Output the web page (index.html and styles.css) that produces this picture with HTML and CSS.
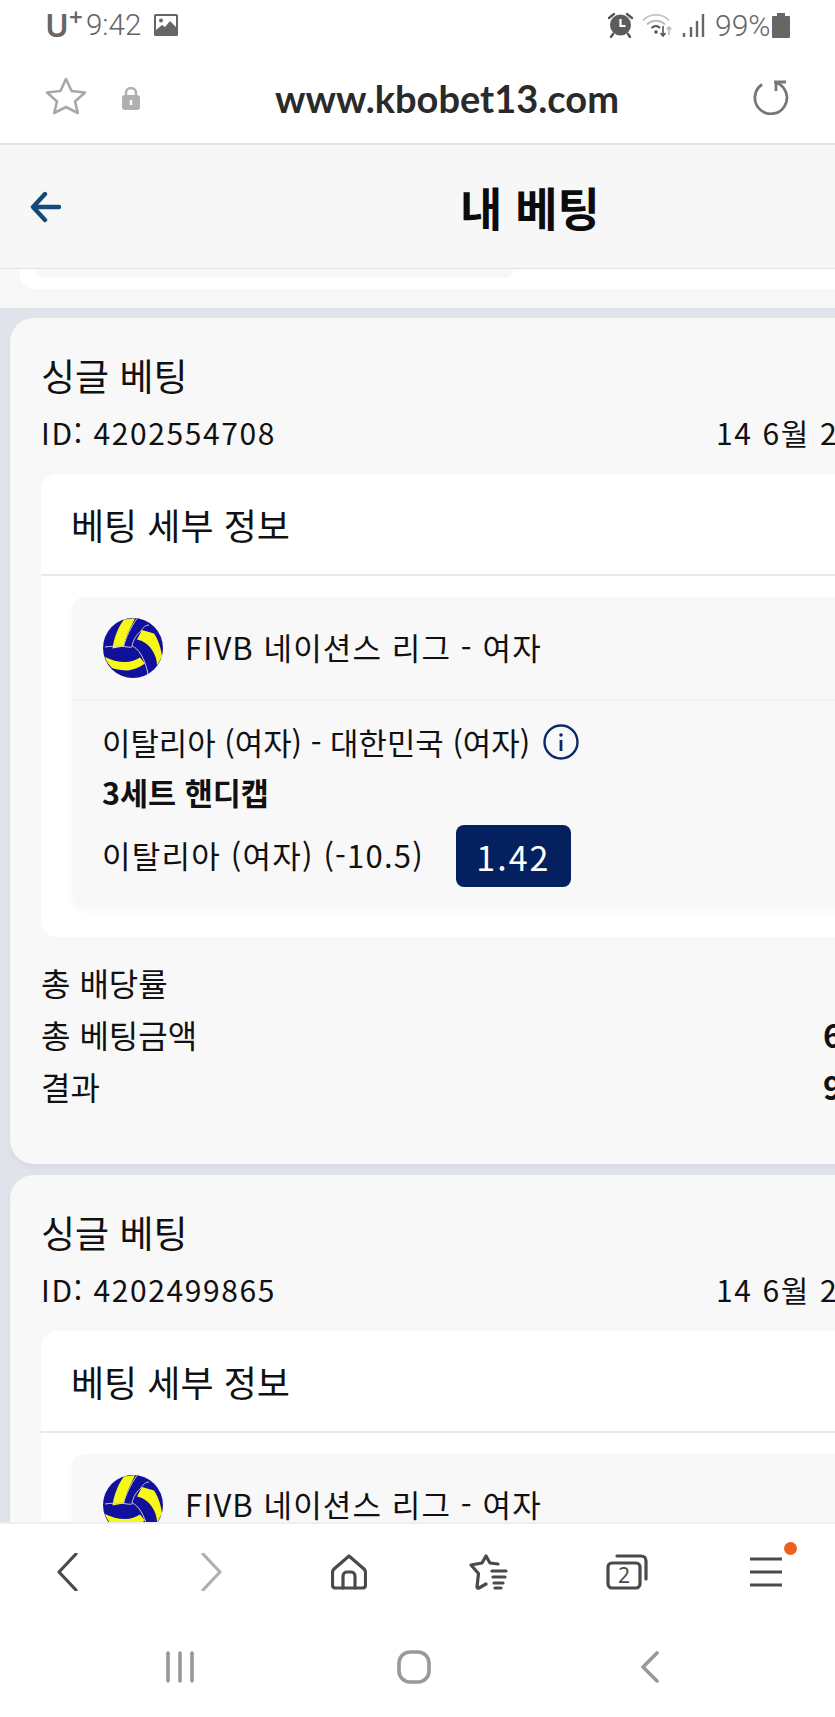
FILE: index.html
```html
<!DOCTYPE html>
<html lang="ko">
<head>
  <meta charset="UTF-8">
  <title>내 베팅</title>
  <link rel="stylesheet" href="styles.css">
</head>
<body>
  <div class="phone">
    <div class="status-bar">
      <div class="status-left">
        <span class="carrier">U<sup>+</sup></span>
        <span class="clock">9:42</span>
        <svg class="pic-icon" width="24" height="22" viewBox="0 0 24 22">
          <rect x="0" y="0" width="24" height="22" rx="1.5" fill="#666"/>
          <rect x="2" y="2" width="20" height="15" fill="#fff"/>
          <circle cx="7" cy="6.5" r="2" fill="#666"/>
          <path d="M2 16l6-5 3 2 5-6 6 6v4H2z" fill="#666"/>
        </svg>
      </div>
      <div class="status-right">
        <svg width="27" height="26" viewBox="0 0 27 26">
          <path d="M2 6l5-4M25 6l-5-4" stroke="#555" stroke-width="2.4" stroke-linecap="round"/>
          <circle cx="13.5" cy="13" r="10.5" fill="#5c5c5c"/>
          <path d="M13.5 7v7h5" stroke="#fff" stroke-width="2.2" fill="none"/>
          <path d="M6 22l-2 3M21 22l2 3" stroke="#555" stroke-width="2.4" stroke-linecap="round"/>
        </svg>
        <svg class="wifi" width="31" height="26" viewBox="0 0 31 26">
          <path d="M1 8.5C8 1 20 1 27 8.5" stroke="#c4c4c4" stroke-width="1.8" fill="none"/>
          <path d="M5 12.5c5-5 13-5 18 0" stroke="#bbb" stroke-width="1.8" fill="none"/>
          <path d="M9.5 16c3-2.5 6-2.5 8.500 0" stroke="#555" stroke-width="2" fill="none"/>
          <circle cx="14" cy="20" r="1.800" fill="#555"/>
          <path d="M21 14v10M18.500 21l2.500 3 2.500-3" stroke="#555" stroke-width="1.600" fill="none"/>
          <path d="M27 23v-8M24.800 17.500l2.200-2.500 2.200 2.500" stroke="#bbb" stroke-width="1.600" fill="none"/>
        </svg>
        <svg class="signal" width="23" height="24" viewBox="0 0 23 24">
          <path d="M2 20v4M9 14v10M15 8v16M21 1v23" stroke="#666" stroke-width="2.400"/>
        </svg>
        <span class="battery-text">99%</span>
        <svg width="18" height="25" viewBox="0 0 18 25">
          <path d="M5 0h8v3h4a1 1 0 0 1 1 1v20a1 1 0 0 1-1 1H1a1 1 0 0 1-1-1V4a1 1 0 0 1 1-1h4z" fill="#666"/>
        </svg>
      </div>
    </div>

    <div class="url-bar">
      <svg class="url-star" width="42" height="38" viewBox="0 0 42 38">
        <path d="M21 2l5.600 12 13.400 1.500-10 9 2.800 11.500L21 30l-11.800 6L12 24.500l-10-9L15.400 14z" fill="none" stroke="#a8a8a8" stroke-width="2.600" stroke-linejoin="round"/>
      </svg>
      <svg class="url-lock" width="20" height="24" viewBox="0 0 20 24">
        <path d="M5 10V7a5 5 0 0 1 10 0v3" fill="none" stroke="#b0b0b0" stroke-width="2.400"/>
        <rect x="1" y="9" width="18" height="15" rx="3" fill="#b0b0b0"/>
        <rect x="8.800" y="14" width="2.400" height="5" fill="#fff"/>
      </svg>
      <div class="url-text">www.kbobet13.com</div>
      <svg class="url-reload" width="38" height="36" viewBox="0 0 38 36">
        <path d="M11 5.500A16 16 0 1 0 26 4" fill="none" stroke="#777" stroke-width="2.800"/>
        <path d="M23 3h12M25 3v9" stroke="#777" stroke-width="2.800" fill="none"/>
      </svg>
    </div>

    <div class="page-head">
      <svg class="back-arrow" width="32" height="32" viewBox="0 0 32 32">
        <path d="M29 16H5M15 3L3 16l12 13" fill="none" stroke="#154a78" stroke-width="4.400" stroke-linecap="round" stroke-linejoin="round"/>
      </svg>
      <h1 class="page-title">내 베팅</h1>
    </div>

    <div class="content">
      <div class="prev-end">
        <div class="prev-white"><div class="prev-inner"></div></div>
      </div>

      <div class="bets">
        <div class="bet-card">
          <div class="bet-type">싱글 베팅</div>
          <div class="bet-id-row">
            <span>ID: 4202554708</span>
            <span>14 6월 2</span>
          </div>
          <div class="details">
            <div class="details-title">베팅 세부 정보</div>
            <div class="details-body">
              <div class="match">
                <div class="league">
                  <svg class="ball" width="60" height="60" viewBox="0 0 60 60">
                    <circle cx="30" cy="30" r="30" fill="#10109c"/>
                    <path d="M21 1.500L32 .2 25 15c-2 5-3.500 9-4.500 13.500L9.500 30.500C11 20 15 9 21 1.500z" fill="#f8f816"/>
                    <path d="M39 12l12 3.500c4 6 7 14 8 23l-5 9c0-6-2-11-5-15.500-3-5-8-9-15-10.500z" fill="#f8f816"/>
                    <path d="M2 39c6 3 13 5 20 5 6 0 11-2 15-4.500l5 6c-6 4-11 6-17 7-6 0-12-1-16-2.500-3-3-6-7-7-11z" fill="#f8f816"/>
                    <path d="M20.500 28.500C23 19 28 9 34 .5M38 13c-4 3-8 9-9 15M29 28c6 2 13 12 16 28M2 29c6-1 13-1 19-.500 3 .500 6 1 8 .500M46 7c-3 0-6 2-8 6" fill="none" stroke="#c9c9cf" stroke-width="1"/>
                  </svg>
                  <span class="league-name">FIVB 네이션스 리그 - 여자</span>
                </div>
                <div class="match-body">
                  <div class="teams">
                    <span>이탈리아 (여자) - 대한민국 (여자)</span>
                    <svg class="info" width="36" height="36" viewBox="0 0 36 36">
                      <circle cx="18" cy="18" r="16.500" fill="none" stroke="#0b2a6b" stroke-width="2.400"/>
                      <circle cx="18" cy="11" r="1.800" fill="#0b2a6b"/>
                      <path d="M18 16v11" stroke="#0b2a6b" stroke-width="2.800"/>
                    </svg>
                  </div>
                  <div class="market">3세트 핸디캡</div>
                  <div class="pick">
                    <span class="pick-name">이탈리아 (여자) (-10.5)</span>
                    <span class="odds">1.42</span>
                  </div>
                </div>
              </div>
            </div>
          </div>
          <div class="totals">
            <div class="total-row"><span>총 배당률</span></div>
            <div class="total-row"><span>총 베팅금액</span><b>6</b></div>
            <div class="total-row"><span>결과</span><b>9</b></div>
          </div>
        </div>

        <div class="bet-card">
          <div class="bet-type">싱글 베팅</div>
          <div class="bet-id-row">
            <span>ID: 4202499865</span>
            <span>14 6월 2</span>
          </div>
          <div class="details">
            <div class="details-title">베팅 세부 정보</div>
            <div class="details-body">
              <div class="match">
                <div class="league">
                  <svg class="ball" width="60" height="60" viewBox="0 0 60 60">
                    <circle cx="30" cy="30" r="30" fill="#10109c"/>
                    <path d="M21 1.500L32 .2 25 15c-2 5-3.500 9-4.500 13.500L9.500 30.500C11 20 15 9 21 1.500z" fill="#f8f816"/>
                    <path d="M39 12l12 3.500c4 6 7 14 8 23l-5 9c0-6-2-11-5-15.500-3-5-8-9-15-10.500z" fill="#f8f816"/>
                    <path d="M2 39c6 3 13 5 20 5 6 0 11-2 15-4.500l5 6c-6 4-11 6-17 7-6 0-12-1-16-2.500-3-3-6-7-7-11z" fill="#f8f816"/>
                    <path d="M20.500 28.500C23 19 28 9 34 .5M38 13c-4 3-8 9-9 15M29 28c6 2 13 12 16 28M2 29c6-1 13-1 19-.500 3 .500 6 1 8 .500M46 7c-3 0-6 2-8 6" fill="none" stroke="#c9c9cf" stroke-width="1"/>
                  </svg>
                  <span class="league-name">FIVB 네이션스 리그 - 여자</span>
                </div>
              </div>
            </div>
          </div>
        </div>
      </div>
    </div>

    <div class="browser-bar">
      <svg width="22" height="38" viewBox="0 0 22 38"><path d="M20 1L3 19l17 18" class="ico" stroke="#4a4a4a"/></svg>
      <svg width="22" height="38" viewBox="0 0 22 38"><path d="M2 1l17 18L2 37" class="ico" stroke="#b0b0b0"/></svg>
      <svg width="36" height="36" viewBox="0 0 36 36">
        <path d="M18 2L3 15c-1 1-1.500 2-1.500 3.500V31c0 2 1 3 3 3h27c2 0 3-1 3-3V18.500c0-1.500-.5-2.500-1.500-3.500z" class="ico" stroke="#4a4a4a"/>
        <path d="M12 34V22c0-2.500 2-4 4-4h4c2 0 4 1.500 4 4v12" class="ico" stroke="#4a4a4a"/>
      </svg>
      <svg width="40" height="36" viewBox="0 0 40 36">
        <path d="M30 10l-8-1-4-7-4 7-11 2 7.500 8.500L9 33c0 1 1 1.500 2 1l7-4" class="ico" stroke="#4a4a4a"/>
        <path d="M24 17h14M25 23h12M26 29h9M27 34h6" class="ico" stroke="#4a4a4a"/>
      </svg>
      <svg width="42" height="36" viewBox="0 0 42 36">
        <path d="M11 2h24c3 0 5 2 5 5v18" class="ico" stroke="#4a4a4a"/>
        <rect x="2" y="9" width="32" height="25" rx="4" class="ico" stroke="#4a4a4a"/>
        <text x="18" y="29" class="tab-count">2</text>
      </svg>
      <div class="menu-btn">
        <svg width="32" height="30" viewBox="0 0 32 30"><path d="M0 2h32M0 15h32M0 28h32" class="ico" stroke="#4a4a4a"/></svg>
        <span class="menu-dot"></span>
      </div>
    </div>

    <div class="nav-bar">
      <svg width="30" height="32" viewBox="0 0 30 32"><path d="M3 2v28M15 2v28M27 2v28" stroke="#999" stroke-width="3.600" stroke-linecap="round"/></svg>
      <svg width="34" height="34" viewBox="0 0 34 34"><rect x="2" y="2" width="30" height="30" rx="11" fill="none" stroke="#999" stroke-width="3.600"/></svg>
      <svg width="20" height="32" viewBox="0 0 20 32"><path d="M17 2L3 16l14 14" fill="none" stroke="#999" stroke-width="3.600" stroke-linecap="round" stroke-linejoin="round"/></svg>
    </div>
  </div>
</body>
</html>
```

FILE: styles.css
```css
* {
  box-sizing: border-box;
}

html, body {
  margin: 0;
  padding: 0;
}

body {
  width: 835px;
  height: 1717px;
  overflow: hidden;
  background: #fff;
  font-family: "Noto Sans CJK KR", "Noto Sans", sans-serif;
  color: #111;
}

svg {
  display: block;
  flex: none;
}

.phone {
  width: 835px;
  height: 1717px;
  display: flex;
  flex-direction: column;
  overflow: hidden;
}

/* status bar */
.status-bar {
  height: 50px;
  flex: none;
  display: flex;
  justify-content: space-between;
  align-items: center;
  padding: 0 45px;
  color: #666;
}

.status-left, .status-right {
  display: flex;
  align-items: center;
}

.carrier {
  font-family: "Noto Sans", sans-serif;
  font-size: 32px;
  font-weight: 600;
  line-height: 36px;
  width: 41px;
}

.carrier sup {
  font-size: 24px;
  line-height: 0;
  vertical-align: 11px;
}

.clock {
  font-family: "Roboto", sans-serif;
  font-weight: 300;
  font-size: 29.5px;
  width: 68px;
}

.wifi {
  margin-left: 8px;
}

.signal {
  margin-left: 9px;
}

.battery-text {
  font-family: "Roboto", sans-serif;
  font-weight: 300;
  font-size: 30px;
  width: 57px;
  margin-left: 10px;
}

/* url bar */
.url-bar {
  height: 95px;
  flex: none;
  display: flex;
  align-items: center;
  padding: 2px 46px 0 45px;
  border-bottom: 2px solid #e3e3e5;
}

.url-star {
  margin-bottom: 4px;
}

.url-lock {
  margin-left: 34px;
}

.url-text {
  flex: 1;
  text-align: center;
  font-family: "Lato", sans-serif;
  font-size: 38px;
  font-weight: 700;
  color: #2a2a2a;
  padding-left: 2px;
}

.url-reload {
  margin-bottom: 2px;
}

/* page header */
.page-head {
  width: 1058px;
  height: 124px;
  flex: none;
  display: grid;
  grid-template-columns: 1fr auto 1fr;
  align-items: center;
  padding: 0 28px 0 30px;
  background: #f7f7f8;
  border-bottom: 1px solid #dfe2e8;
}

.page-title {
  margin: 0 0 2px;
  font-size: 46px;
  font-weight: 700;
  line-height: 1;
  color: #0c0c0c;
}

/* scrolling part */
.content {
  flex: 1;
  min-height: 0;
  overflow: hidden;
  background: #e0e4ea;
}

.prev-end {
  height: 39px;
  background: #f8f8f9;
  padding-left: 20px;
}

.prev-white {
  height: 20px;
  background: #fff;
  border-radius: 0 0 0 14px;
  padding-left: 16px;
}

.prev-inner {
  width: 477px;
  height: 7px;
  background: #f8f8f9;
  border-radius: 0 0 12px 12px;
  box-shadow: 0 1px 2px rgba(0, 0, 0, 0.05);
}

.bets {
  width: 1048px;
  padding: 10px 0 0 10px;
  display: flex;
  flex-direction: column;
  gap: 11px;
}

.bet-card {
  flex: none;
  background: #f8f8f9;
  border-radius: 24px;
  padding: 32px 31px 0;
  height: 846px;
  box-shadow: 0 4px 6px rgba(0, 0, 0, 0.04);
}

.bet-type {
  font-size: 37px;
  line-height: 50px;
}

.bet-id-row {
  display: grid;
  grid-template-columns: 675px auto;
  font-size: 30px;
  letter-spacing: 1.6px;
  line-height: 40px;
  margin-top: 12px;
  white-space: nowrap;
}

.details {
  margin-top: 22px;
  width: 1000px;
  height: 463px;
  background: #fff;
  border-radius: 16px;
}

.details-title {
  height: 102px;
  padding: 25px 30px 0;
  font-size: 36px;
  line-height: 50px;
  border-bottom: 2px solid #e6e8ec;
}

.details-body {
  padding: 21px 31px 0;
}

.match {
  background: #f8f8f9;
  border-radius: 12px;
  height: 308px;
  box-shadow: 0 6px 8px rgba(0, 0, 0, 0.03);
}

.league {
  height: 104px;
  display: flex;
  align-items: center;
  gap: 22px;
  padding-left: 31px;
  border-bottom: 2px solid #f1f1f3;
  font-size: 31px;
  letter-spacing: 1.1px;
}

.league-name {
  margin-bottom: 3px;
}

.match-body {
  padding: 18px 30px 0;
}

.teams {
  display: flex;
  align-items: center;
  gap: 13px;
  font-size: 30.9px;
  line-height: 46px;
}

.market {
  font-size: 30.5px;
  font-weight: 700;
  line-height: 46px;
  margin-top: 4px;
}

.pick {
  display: flex;
  align-items: center;
  gap: 32px;
  font-size: 31px;
  letter-spacing: 1.2px;
  margin-top: 10px;
}

.pick-name {
  margin-bottom: 4px;
}

.odds {
  width: 115px;
  height: 62px;
  display: flex;
  align-items: center;
  justify-content: center;
  background: #04205f;
  color: #fff;
  border-radius: 8px;
  font-size: 34px;
  letter-spacing: 2px;
}

.totals {
  margin-top: 19px;
}

.total-row {
  display: grid;
  grid-template-columns: 782px auto;
  height: 52px;
  align-items: center;
  font-size: 32px;
  line-height: 52px;
}

.total-row b {
  font-weight: 700;
}

/* bottom bars */
.browser-bar {
  height: 114px;
  flex: none;
  display: grid;
  grid-template-columns: 145px 130px 137px 138px 144px auto;
  align-items: center;
  justify-items: start;
  padding: 0 0 16px 56px;
  background: #fff;
  border-top: 2px solid #eeeeef;
}

.ico {
  fill: none;
  stroke-width: 3.2;
  stroke-linecap: round;
  stroke-linejoin: round;
}

.tab-count {
  font-family: "Noto Sans", sans-serif;
  font-size: 21px;
  fill: #4a4a4a;
  text-anchor: middle;
}

.menu-btn {
  position: relative;
}

.menu-dot {
  position: absolute;
  top: -15px;
  right: -15px;
  width: 13px;
  height: 13px;
  border-radius: 50%;
  background: #ec5f1c;
}

.nav-bar {
  height: 81px;
  flex: none;
  display: grid;
  grid-template-columns: 232px 243px auto;
  align-items: center;
  padding: 0 0 20px 165px;
  background: #fff;
}
```
